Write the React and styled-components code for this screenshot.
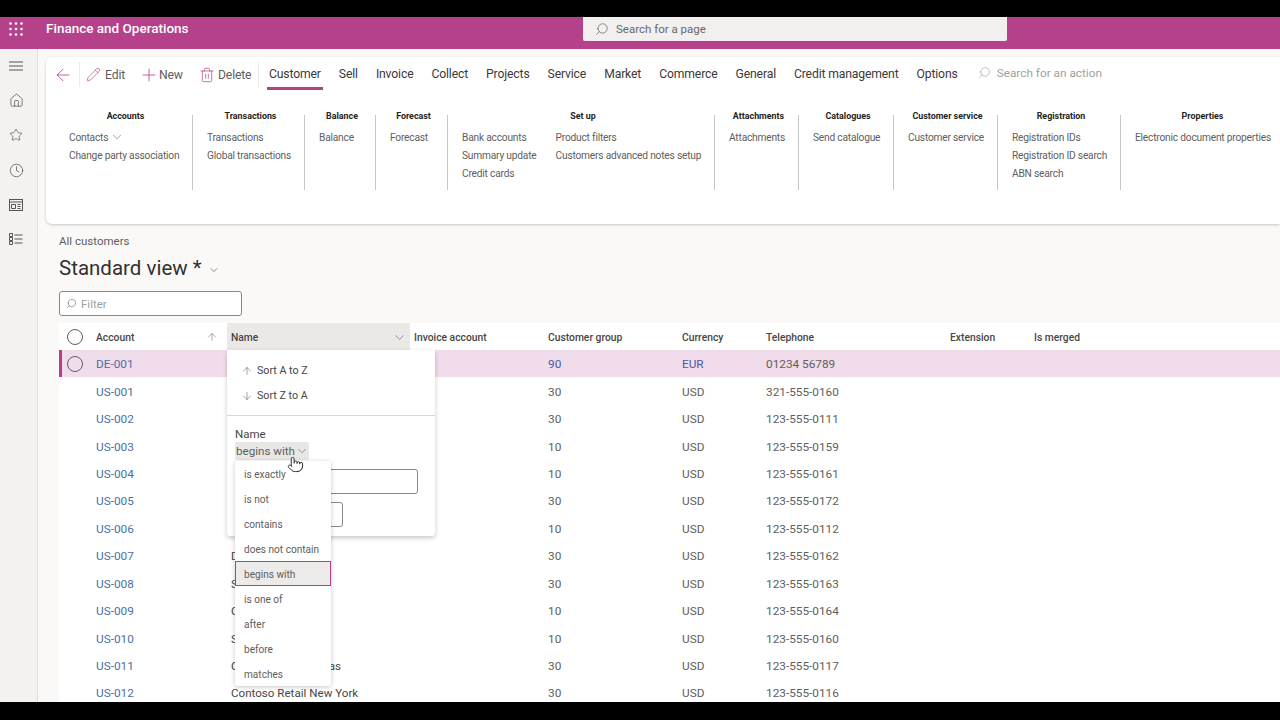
import React from "react";
import styled, { createGlobalStyle } from "styled-components";
import { ArrowDown, ArrowLeft, ArrowUp, ChevronDown, Clock, Home, Pencil, Plus, Pointer, Search, Star, Trash2 } from "lucide-react";

const tabs = ["Sell", "Invoice", "Collect", "Projects", "Service", "Market", "Commerce", "General", "Credit management", "Options"];

const ribbon = [
    { title: "Accounts", width: 138, columns: [["Contacts", "Change party association"]] },
    { title: "Transactions", width: 112, columns: [["Transactions", "Global transactions"]] },
    { title: "Balance", width: 71, columns: [["Balance"]] },
    { title: "Forecast", width: 72, columns: [["Forecast"]] },
    { title: "Set up", width: 267, columns: [["Bank accounts", "Summary update", "Credit cards"], ["Product filters", "Customers advanced notes setup"]] },
    { title: "Attachments", width: 84, columns: [["Attachments"]] },
    { title: "Catalogues", width: 95, columns: [["Send catalogue"]] },
    { title: "Customer service", width: 104, columns: [["Customer service"]] },
    { title: "Registration", width: 123, columns: [["Registration IDs", "Registration ID search", "ABN search"]] },
    { title: "Properties", width: 159, last: true, columns: [["Electronic document properties"]] },
];

const rows = [
    ["DE-001", "", "90", "EUR", "01234 56789"],
    ["US-001", "", "30", "USD", "321-555-0160"],
    ["US-002", "", "30", "USD", "123-555-0111"],
    ["US-003", "", "10", "USD", "123-555-0159"],
    ["US-004", "", "10", "USD", "123-555-0161"],
    ["US-005", "", "30", "USD", "123-555-0172"],
    ["US-006", "", "10", "USD", "123-555-0112"],
    ["US-007", "D", "30", "USD", "123-555-0162"],
    ["US-008", "S", "30", "USD", "123-555-0163"],
    ["US-009", "C", "10", "USD", "123-555-0164"],
    ["US-010", "S", "10", "USD", "123-555-0160"],
    ["US-011", "Contoso Retail Dallas", "30", "USD", "123-555-0117"],
    ["US-012", "Contoso Retail New York", "30", "USD", "123-555-0116"],
];

const operators = ["is exactly", "is not", "contains", "does not contain", "begins with", "is one of", "after", "before", "matches"];

function App() {
    return (
        <Page>
            <GlobalStyle />
            <Letterbox $height={17} />
            <Header>
                <Waffle viewBox="0 0 14 14">
                    {[1.5, 7, 12.5].map((y) =>
                        [1.5, 7, 12.5].map((x) => <circle key={`${x}-${y}`} cx={x} cy={y} r="1.3" fill="#fff" />)
                    )}
                </Waffle>
                <AppTitle>Finance and Operations</AppTitle>
                <PageSearch>
                    <MirroredSearch size={14} color="#605e5c" />
                    Search for a page
                </PageSearch>
            </Header>
            <Body>
                <Sidebar>
                    <SideSlot>
                        <svg width="14" height="10" viewBox="0 0 14 10" fill="none" stroke="#555" strokeWidth="1">
                            <path d="M0 1h14M0 5h14M0 9h14" />
                        </svg>
                    </SideSlot>
                    <SideSlot><Home size={15} strokeWidth={1.2} /></SideSlot>
                    <SideSlot><Star size={14} strokeWidth={1.2} /></SideSlot>
                    <SideSlot><Clock size={15} strokeWidth={1.2} /></SideSlot>
                    <SideSlot>
                        <svg width="14" height="12" viewBox="0 0 14 12" fill="none" stroke="#555" strokeWidth="1">
                            <rect x="0.5" y="0.5" width="13" height="11" />
                            <path d="M0.5 3h13M2.5 5.5h4v4h-4zM8.5 5.5h3M8.5 7.5h3M8.5 9.5h3" />
                        </svg>
                    </SideSlot>
                    <SideSlot>
                        <svg width="14" height="12" viewBox="0 0 14 12" fill="none" stroke="#555" strokeWidth="1">
                            <path d="M0.5 0.5h3v3h-3zM0.5 4.5h3v3h-3zM0.5 8.5h3v3h-3zM5.5 2h8M5.5 6h8M5.5 10h8" />
                        </svg>
                    </SideSlot>
                </Sidebar>
                <Main>
                    <RibbonCard>
                        <Toolbar>
                            <BackButton><ArrowLeft size={20} strokeWidth={1} /></BackButton>
                            <Action $width={55} $pad={6} $gap={4}><Pencil size={15} strokeWidth={1.1} />Edit</Action>
                            <Action $width={60} $pad={4} $gap={0}><Plus size={20} strokeWidth={1} />New</Action>
                            <ActionLast $width={64} $pad={4} $gap={3}><Trash2 size={16} strokeWidth={1.1} />Delete</ActionLast>
                            <Tab $active>Customer</Tab>
                            {tabs.map((tab) => <Tab key={tab}>{tab}</Tab>)}
                            <ActionSearch>
                                <MirroredSearch size={13} color="#a19f9d" />
                                Search for an action
                            </ActionSearch>
                        </Toolbar>
                        <RibbonGroups>
                            {ribbon.map((group) => (
                                <Group key={group.title} $width={group.width} $last={group.last}>
                                    <GroupTitle>{group.title}</GroupTitle>
                                    <GroupColumns>
                                        {group.columns.map((column) => (
                                            <GroupColumn key={column[0]}>
                                                {column.map((item) => (
                                                    <GroupItem key={item}>
                                                        {item}
                                                        {item === "Contacts" && <ChevronDown size={14} strokeWidth={1} />}
                                                    </GroupItem>
                                                ))}
                                            </GroupColumn>
                                        ))}
                                    </GroupColumns>
                                </Group>
                            ))}
                        </RibbonGroups>
                    </RibbonCard>
                    <Content>
                        <Breadcrumb>All customers</Breadcrumb>
                        <ViewTitle>Standard view *<ChevronDown size={12} strokeWidth={1.1} /></ViewTitle>
                        <FilterBox>
                            <MirroredSearch size={11} color="#605e5c" />
                            Filter
                        </FilterBox>
                        <GridWrap>
                            <HeaderRow>
                                <CheckCell><RowCheck /></CheckCell>
                                <HeaderCell $first>Account<ArrowUp size={12} strokeWidth={1} /></HeaderCell>
                                <HeaderCell $active>Name<ChevronDown size={15} strokeWidth={1} /></HeaderCell>
                                <HeaderCell>Invoice account</HeaderCell>
                                <HeaderCell>Customer group</HeaderCell>
                                <HeaderCell>Currency</HeaderCell>
                                <HeaderCell>Telephone</HeaderCell>
                                <HeaderCell>Extension</HeaderCell>
                                <HeaderCell>Is merged</HeaderCell>
                            </HeaderRow>
                            {rows.map((row, index) => (
                                <DataRow key={row[0]} $selected={index === 0}>
                                    <CheckCell>{index === 0 && <RowCheck />}</CheckCell>
                                    <LinkCell>{row[0]}</LinkCell>
                                    <NameCell>{row[1]}</NameCell>
                                    <Cell />
                                    <ValueCell $link={index === 0}>{row[2]}</ValueCell>
                                    <ValueCell $link={index === 0}>{row[3]}</ValueCell>
                                    <ValueCell>{row[4]}</ValueCell>
                                    <Cell />
                                    <Cell />
                                </DataRow>
                            ))}
                            <ColumnMenu>
                                <SortList>
                                    <SortItem><ArrowUp size={12} strokeWidth={1} />Sort A to Z</SortItem>
                                    <SortItem><ArrowDown size={12} strokeWidth={1} />Sort Z to A</SortItem>
                                </SortList>
                                <FilterSection>
                                    <FieldLabel>Name</FieldLabel>
                                    <OperatorChip>begins with<ChevronDown size={14} strokeWidth={1} /></OperatorChip>
                                    <ValueInput />
                                    <ApplyButton />
                                </FilterSection>
                                <OperatorList>
                                    {operators.map((op) => (
                                        <OperatorItem key={op} $selected={op === "begins with"}>{op}</OperatorItem>
                                    ))}
                                </OperatorList>
                                <HandCursor><Pointer size={17} strokeWidth={1.3} fill="#fff" color="#222" /></HandCursor>
                            </ColumnMenu>
                        </GridWrap>
                    </Content>
                </Main>
            </Body>
            <Letterbox $height={18} />
        </Page>
    );
}

export default App;

const GlobalStyle = createGlobalStyle`
    html, body {
        margin: 0;
        padding: 0;
        background: #000;
    }
    * {
        box-sizing: border-box;
    }
`;

const Page = styled.div`
    width: 1280px;
    height: 720px;
    display: flex;
    flex-direction: column;
    overflow: hidden;
    font-family: Roboto, "Noto Sans", sans-serif;
    color: #323130;
`;

const Letterbox = styled.div`
    height: ${(p) => p.$height}px;
    flex: none;
    background: #000;
`;

const Header = styled.header`
    height: 32px;
    flex: none;
    display: flex;
    align-items: flex-start;
    background: #b5418b;
`;

const Waffle = styled.svg`
    width: 14px;
    height: 14px;
    margin: 5px 0 0 9px;
`;

const AppTitle = styled.div`
    width: 537px;
    margin-left: 23px;
    font-size: 13.5px;
    font-weight: 500;
    line-height: 23px;
    color: #fff;
`;

const PageSearch = styled.div`
    width: 424px;
    height: 24px;
    display: flex;
    align-items: center;
    gap: 7px;
    padding: 1px 0 0 12px;
    border-radius: 0 0 2px 2px;
    border-bottom: 1px solid #f6e6f1;
    background: #f1f0ef;
    font-size: 11.5px;
    color: #69676a;
`;

const MirroredSearch = styled(Search)`
    flex: none;
    transform: scaleX(-1);
    stroke-width: 1.2;
`;

const Body = styled.div`
    flex: 1;
    min-height: 0;
    display: flex;
`;

const Sidebar = styled.nav`
    width: 38px;
    flex: none;
    display: flex;
    flex-direction: column;
    padding-right: 5px;
    border-right: 1px solid #e1dfdd;
    background: #f3f2f1;
    color: #555;
`;

const SideSlot = styled.div`
    height: 34.6px;
    display: flex;
    align-items: center;
    justify-content: center;
`;

const Main = styled.main`
    flex: 1;
    min-width: 0;
    background: #faf9f8;
    padding-top: 8px;
    overflow: hidden;
`;

const RibbonCard = styled.section`
    height: 167px;
    margin-left: 8px;
    border-radius: 6px 0 0 6px;
    background: #fff;
    box-shadow: 0 1px 3px rgba(0, 0, 0, 0.2);
`;

const Toolbar = styled.div`
    height: 33px;
    display: flex;
    align-items: stretch;
    font-size: 12.2px;
    letter-spacing: -0.15px;
    color: #3b3a39;
`;

const BackButton = styled.div`
    width: 34px;
    flex: none;
    display: flex;
    align-items: center;
    justify-content: flex-end;
    padding-right: 6px;
    border-right: 1px solid #edebe9;
    margin: 5px 0 3px;
    color: #b5418b;
`;

const Action = styled.div`
    width: ${(p) => p.$width}px;
    flex: none;
    display: flex;
    align-items: center;
    gap: ${(p) => p.$gap}px;
    padding-left: ${(p) => p.$pad}px;
    margin: 5px 0 3px;
    color: #605e5c;
    svg {
        color: #b5418b;
    }
`;

const ActionLast = styled(Action)`
    border-right: 1px solid #edebe9;
    margin-right: 8px;
`;

const Tab = styled.div`
    display: flex;
    align-items: center;
    margin-right: 14px;
    padding: 3px 2px 0;
    white-space: nowrap;
    border-bottom: 3px solid ${(p) => (p.$active ? "#b5418b" : "transparent")};
`;

const ActionSearch = styled.div`
    display: flex;
    align-items: center;
    gap: 6px;
    margin: 1px 0 3px 4px;
    font-size: 11.8px;
    letter-spacing: 0;
    color: #a19f9d;
`;

const RibbonGroups = styled.div`
    display: flex;
    padding: 25px 0 0 9px;
`;

const Group = styled.div`
    width: ${(p) => p.$width}px;
    height: 75px;
    flex: none;
    padding: 0 10px 0 14px;
    border-right: ${(p) => (p.$last ? "none" : "1px solid #c8c6c4")};
`;

const GroupTitle = styled.div`
    font-size: 8.9px;
    font-weight: 700;
    line-height: 2px;
    height: 2px;
    text-align: center;
    color: #252423;
`;

const GroupColumns = styled.div`
    display: flex;
    gap: 19px;
    margin-top: 11px;
`;

const GroupColumn = styled.div`
    display: flex;
    flex-direction: column;
`;

const GroupItem = styled.div`
    display: flex;
    align-items: center;
    gap: 2px;
    height: 18.3px;
    font-size: 10.2px;
    letter-spacing: -0.2px;
    white-space: nowrap;
    color: #605e5c;
`;

const Content = styled.div`
    padding: 10px 0 0 21px;
`;

const Breadcrumb = styled.div`
    font-size: 11.5px;
    line-height: 14px;
    color: #605e5c;
`;

const ViewTitle = styled.h1`
    display: flex;
    align-items: center;
    gap: 6px;
    margin: 6px 0 0;
    font-size: 20.5px;
    font-weight: 400;
    line-height: 28px;
    color: #323130;
    svg {
        margin-top: 4px;
    }
`;

const FilterBox = styled.div`
    width: 183px;
    height: 25px;
    display: flex;
    align-items: center;
    gap: 4px;
    margin-top: 9px;
    padding-left: 6px;
    border: 1px solid #8a8886;
    border-radius: 3px;
    background: #fff;
    font-size: 11.5px;
    color: #a19f9d;
`;

const GridWrap = styled.div`
    position: relative;
    margin-top: 7px;
    background: #fff;
`;

const gridColumns = "37px 131px 183px 134px 134px 84px 184px 84px 1fr";

const HeaderRow = styled.div`
    display: grid;
    grid-template-columns: ${gridColumns};
    height: 27px;
`;

const DataRow = styled.div`
    display: grid;
    grid-template-columns: ${gridColumns};
    height: 27.45px;
    background: ${(p) => (p.$selected ? "#f1dceb" : "#fff")};
    box-shadow: ${(p) => (p.$selected ? "inset 3px 0 0 #b5418b" : "none")};
`;

const Cell = styled.div`
    min-width: 0;
`;

const CheckCell = styled.div`
    display: flex;
    align-items: center;
    padding-left: 8px;
`;

const RowCheck = styled.span`
    width: 16px;
    height: 16px;
    border: 1px solid #605e5c;
    border-radius: 50%;
`;

const HeaderCell = styled.div`
    display: flex;
    align-items: center;
    justify-content: space-between;
    padding: 1px ${(p) => (p.$first ? "9px" : "3px")} 0 ${(p) => (p.$first ? "0" : "4px")};
    font-size: 10.3px;
    font-weight: 500;
    color: #484644;
    background: ${(p) => (p.$active ? "#ebe9e8" : "transparent")};
    svg {
        color: #605e5c;
    }
`;

const ValueCell = styled.div`
    display: flex;
    align-items: center;
    padding: 1px 0 0 4px;
    font-size: 11.8px;
    color: ${(p) => (p.$link ? "#4a5aa0" : "#605e5c")};
`;

const LinkCell = styled(ValueCell)`
    padding-left: 0;
    color: #4a6fa8;
`;

const NameCell = styled(ValueCell)`
    font-size: 11.6px;
    color: #484644;
    white-space: nowrap;
`;

const ColumnMenu = styled.div`
    position: absolute;
    left: 168px;
    top: 27px;
    width: 208px;
    height: 186px;
    background: #fff;
    border-radius: 0 0 3px 3px;
    box-shadow: 0 2px 5px rgba(0, 0, 0, 0.22);
`;

const SortList = styled.div`
    height: 66px;
    padding-top: 8px;
    border-bottom: 1px solid #d8d6d4;
`;

const SortItem = styled.div`
    display: flex;
    align-items: center;
    gap: 4px;
    height: 25px;
    padding-left: 14px;
    font-size: 10.7px;
    color: #484644;
`;

const FilterSection = styled.div`
    padding: 10px 0 0 8px;
`;

const FieldLabel = styled.div`
    font-size: 11.5px;
    line-height: 16px;
    color: #484644;
`;

const OperatorChip = styled.div`
    width: 74px;
    height: 18px;
    display: flex;
    align-items: center;
    justify-content: space-between;
    padding: 0 0 0 1px;
    background: #e9e7e6;
    border-radius: 2px;
    font-size: 11.6px;
    color: #605e5c;
`;

const ValueInput = styled.div`
    width: 183px;
    height: 25px;
    margin-top: 9px;
    border: 1px solid #8a8886;
    border-radius: 3px;
`;

const ApplyButton = styled.div`
    width: 108px;
    height: 25px;
    margin-top: 8px;
    border: 1px solid #8a8886;
    border-radius: 3px;
`;

const OperatorList = styled.div`
    position: absolute;
    left: 8px;
    top: 111px;
    width: 96px;
    background: #fff;
    border-radius: 3px;
    box-shadow: 0 1px 5px rgba(0, 0, 0, 0.22);
`;

const OperatorItem = styled.div`
    height: 25px;
    display: flex;
    align-items: center;
    padding: 1px 0 0 9px;
    font-size: 10.1px;
    color: #605e5c;
    background: ${(p) => (p.$selected ? "#edebe9" : "transparent")};
    outline: ${(p) => (p.$selected ? "1px solid #b5418b" : "none")};
    outline-offset: -1px;
`;

const HandCursor = styled.div`
    position: absolute;
    left: 60px;
    top: 106px;
    line-height: 0;
`;
